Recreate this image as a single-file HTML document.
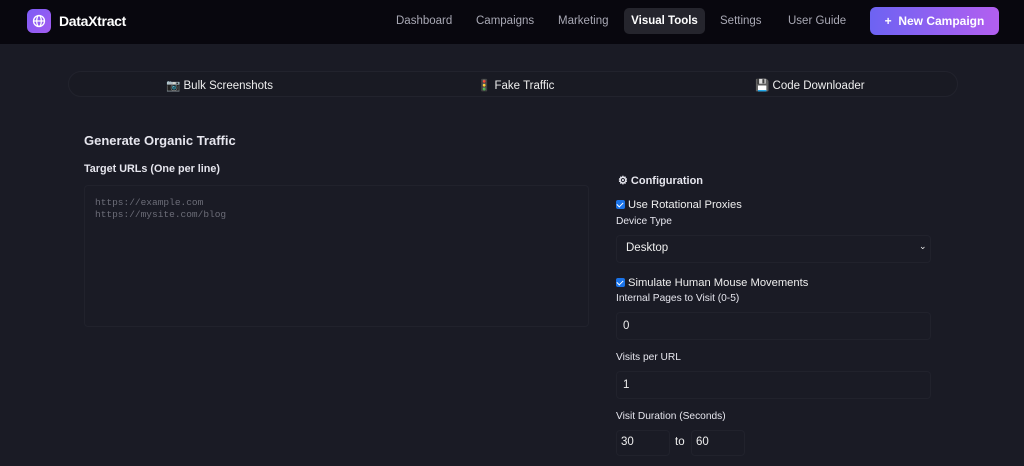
<!DOCTYPE html>
<html><head><style>
*{box-sizing:border-box;margin:0;padding:0}
body{width:1024px;height:466px;overflow:hidden;background:#1a1b25;font-family:"Liberation Sans",sans-serif;color:#e8e8ee;position:relative}
.hdr{position:absolute;left:0;top:0;width:1024px;height:44px;background:#08070e}
.logo{position:absolute;left:27px;top:9px;width:24px;height:24px;border-radius:6px;background:linear-gradient(135deg,#7c5cf6,#a35cf0)}
.brand{position:absolute;left:59px;top:13px;font-size:14px;font-weight:bold;color:#fff;letter-spacing:-0.3px}
.nav{position:absolute;top:15px;font-size:11.5px;color:#a8a8b4}
.vt{position:absolute;left:624px;top:8px;width:81px;height:26px;background:#25252d;border-radius:5px;color:#fff;font-weight:bold;font-size:11.5px;text-align:center;line-height:26px}
.btn{position:absolute;left:870px;top:7px;width:129px;height:28px;border-radius:6px;background:linear-gradient(90deg,#6d63f2,#b35ff0);color:#fff;font-weight:bold;font-size:12px;line-height:28px;text-align:center}
.tabs{position:absolute;left:68px;top:71px;width:890px;height:26px;border:1px solid #22232d;border-radius:13px;background:#191a23}
.tab{position:absolute;top:78px;font-size:11.5px;color:#eee}
.lbl{position:absolute;font-size:10.2px;color:#e6e6ee}
.b{font-weight:bold}
.box{position:absolute;border:1px solid #21222c;border-radius:4px;background:#1a1b25}
.chk{position:absolute;width:9px;height:9px;background:#1a73e8;border-radius:2px}
.chk:after{content:"";position:absolute;left:2px;top:1px;width:3px;height:5px;border:solid #fff;border-width:0 1.5px 1.5px 0;transform:rotate(45deg)}
.val{position:absolute;font-size:11.5px;color:#eee}
</style></head><body>
<div class="hdr"></div>
<div class="logo"><svg width="24" height="24" viewBox="0 0 24 24" fill="none" stroke="#fff" stroke-width="1.3"><circle cx="12" cy="12" r="5.5"/><ellipse cx="12" cy="12" rx="2.3" ry="5.5"/><path d="M6.5 12h11"/></svg></div>
<div class="brand">DataXtract</div>
<div class="nav" style="left:396px">Dashboard</div>
<div class="nav" style="left:476px">Campaigns</div>
<div class="nav" style="left:558px">Marketing</div>
<div class="vt">Visual Tools</div>
<div class="nav" style="left:720px">Settings</div>
<div class="nav" style="left:788px">User Guide</div>
<div class="btn">+&nbsp; New Campaign</div>
<div class="tabs"></div>
<div class="tab" style="left:166px">📷 Bulk Screenshots</div>
<div class="tab" style="left:477px">🚦 Fake Traffic</div>
<div class="tab" style="left:755px">💾 Code Downloader</div>
<div class="lbl b" style="left:84px;top:133px;font-size:13px">Generate Organic Traffic</div>
<div class="lbl b" style="left:84px;top:163px;font-size:10.8px">Target URLs (One per line)</div>
<div class="box" style="left:84px;top:185px;width:505px;height:142px"></div>
<div style="position:absolute;left:95px;top:197px;font-family:'Liberation Mono',monospace;font-size:9.5px;color:#6c6d78;line-height:12px">https://example.com<br>https://mysite.com/blog</div>
<div class="lbl b" style="left:618px;top:174px;font-size:11px">⚙ Configuration</div>
<div class="chk" style="left:616px;top:200px"></div>
<div class="val" style="left:628px;top:199px;font-size:11.2px">Use Rotational Proxies</div>
<div class="lbl" style="left:616px;top:216px">Device Type</div>
<div class="box" style="left:616px;top:235px;width:315px;height:28px"></div>
<div class="val" style="left:626px;top:242px">Desktop</div>
<div class="val" style="left:919px;top:241px;font-size:9px">⌄</div>
<div class="chk" style="left:616px;top:278px"></div>
<div class="val" style="left:628px;top:277px;font-size:11.2px">Simulate Human Mouse Movements</div>
<div class="lbl" style="left:616px;top:293px">Internal Pages to Visit (0-5)</div>
<div class="box" style="left:616px;top:312px;width:315px;height:28px"></div>
<div class="val" style="left:623px;top:320px">0</div>
<div class="lbl" style="left:616px;top:352px">Visits per URL</div>
<div class="box" style="left:616px;top:371px;width:315px;height:28px"></div>
<div class="val" style="left:623px;top:379px">1</div>
<div class="lbl" style="left:616px;top:411px">Visit Duration (Seconds)</div>
<div class="box" style="left:616px;top:430px;width:54px;height:26px"></div>
<div class="val" style="left:621px;top:436px">30</div>
<div class="val" style="left:675px;top:436px">to</div>
<div class="box" style="left:691px;top:430px;width:54px;height:26px"></div>
<div class="val" style="left:696px;top:436px">60</div>
</body></html>
